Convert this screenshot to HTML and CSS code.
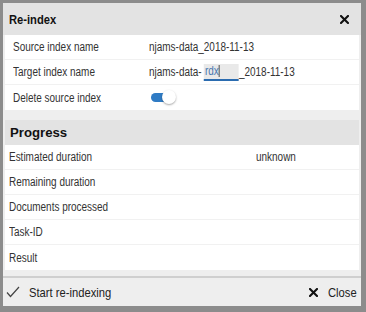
FILE: index.html
```html
<!DOCTYPE html>
<html>
<head>
<meta charset="utf-8">
<link rel="stylesheet" href="styles.css">
</head>
<body>
<div class="frame">
  <div class="dialog">
    <div class="title">
      <span class="t title-text">Re-index</span>
      <svg class="x-icon" width="9" height="9" viewBox="0 0 9 9"><path d="M1 1L8 8M8 1L1 8" stroke="#111" stroke-width="2.1" stroke-linecap="square"/></svg>
    </div>
    <div class="panel">
      <div class="row"><span class="label"><span class="t">Source index name</span></span><span class="t">njams-data_2018-11-13</span></div>
      <div class="row"><span class="label"><span class="t">Target index name</span></span><span class="t value">njams-data-<span class="input">rdx<span class="caret"></span></span>_2018-11-13</span></div>
      <div class="row last"><span class="label"><span class="t">Delete source index</span></span><span class="toggle"><span class="knob"></span></span></div>
    </div>
    <div class="section-head">Progress</div>
    <div class="panel prog">
      <div class="row"><span class="label"><span class="t">Estimated duration</span></span><span class="t">unknown</span></div>
      <div class="row"><span class="label"><span class="t">Remaining duration</span></span></div>
      <div class="row"><span class="label"><span class="t">Documents processed</span></span></div>
      <div class="row"><span class="label"><span class="t">Task-ID</span></span></div>
      <div class="row last"><span class="label"><span class="t">Result</span></span></div>
    </div>
    <div class="footer">
      <div class="btn"><svg width="14" height="12" viewBox="0 0 14 12"><path d="M1 6.5L4.5 10.5L13 1" fill="none" stroke="#444" stroke-width="1.2"/></svg><span class="t">Start re-indexing</span></div>
      <div class="btn close"><svg width="9" height="9" viewBox="0 0 9 9"><path d="M1 1L8 8M8 1L1 8" stroke="#111" stroke-width="2.1" stroke-linecap="square"/></svg><span class="t">Close</span></div>
    </div>
  </div>
</div>
</body>
</html>
```
FILE: styles.css
```css
html, body { margin: 0; padding: 0; }
body {
  width: 366px; height: 312px; overflow: hidden;
  font-family: "Liberation Sans", Arial, sans-serif;
  color: #333;
  background: #8c8c8c;
}
.frame {
  width: 366px; height: 312px; box-sizing: border-box;
  padding: 3px 5px 6px 3px;
  background: #8c8c8c;
}
.dialog {
  height: 100%;
  background: #eeeeee;
  display: flex; flex-direction: column;
}
.t {
  display: inline-block;
  white-space: nowrap;
  transform: scaleX(0.83);
  transform-origin: 0 50%;
}
.title {
  height: 32px; box-sizing: border-box;
  background: #e3e3e3;
  display: flex; align-items: center; justify-content: space-between;
  padding: 0 12px 0 6px;
}
.title-text { font-weight: bold; font-size: 13px; color: #111; transform: scaleX(0.86); }
.panel {
  background: #fff;
  margin: 0 2px;
}
.row {
  height: 25px; box-sizing: border-box;
  border-bottom: 1px solid #f1f1f1;
  display: flex; align-items: center;
  font-size: 12px;
  padding-left: 8px;
}
.row.last { border-bottom: none; }
.label { width: 136px; flex: none; }
.value { display: inline-flex; align-items: center; }
.input {
  display: inline-block;
  background: #e9e9e9;
  width: 42px; height: 17px; box-sizing: border-box;
  border-bottom: 2px solid #2b6cb0;
  margin-left: 3px;
  color: #4a78b0; padding-left: 1px; line-height: 15px;
}
.caret { display: inline-block; width: 1px; height: 12px; background: #333; vertical-align: -2px; }
.toggle {
  display: inline-block; position: relative;
  width: 22px; height: 9px; border-radius: 5px;
  background: #2f7bc4; margin-left: 2px;
}
.knob {
  position: absolute; left: 11px; top: -3px;
  width: 14px; height: 14px; border-radius: 50%;
  background: #fff; box-shadow: 0 1px 2px rgba(0,0,0,0.35);
}
.section-head {
  margin: 10px 2px 0;
  height: 25px; box-sizing: border-box;
  background: #e3e3e3;
  display: flex; align-items: center;
  padding-left: 5px;
  font-weight: bold; font-size: 13.2px; color: #111;
}
.prog .row { padding-left: 4px; }
.prog .label { width: 247px; }
.footer {
  margin-top: 6px;
  border-top: 2px solid #cfcfcf;
  flex: 1;
  display: flex; align-items: center; justify-content: space-between;
  padding: 0 4px 0 3px;
  font-size: 13.5px; color: #222;
}
.btn { display: flex; align-items: center; gap: 9px; }
.btn svg { flex: none; }
.close { gap: 10px; }
.close .t { margin-right: -6px; }
```
